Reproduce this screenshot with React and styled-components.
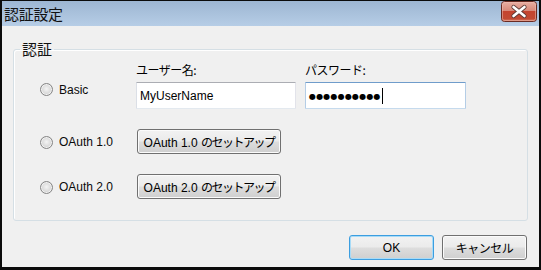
import React from 'react';
import styled, { createGlobalStyle } from 'styled-components';

const GlobalStyle = createGlobalStyle`
  html, body {
    margin: 0;
    padding: 0;
    background: #0b0b0b;
  }
  body {
    font-family: "Liberation Sans", "Noto Sans CJK JP", sans-serif;
    font-size: 12px;
    color: #000;
  }
  * {
    box-sizing: border-box;
  }
`;

const Window = styled.div`
  width: 541px;
  height: 270px;
  border-style: solid;
  border-color: #0b0b0b;
  border-width: 1px 2px 3px 2px;
  background: #f0f0f0;
  display: flex;
  flex-direction: column;
`;

const TitleBar = styled.div`
  flex: none;
  height: 25px;
  padding-left: 2px;
  display: flex;
  justify-content: space-between;
  background: linear-gradient(#9db6d2, #b6cde6);
`;

const Title = styled.span`
  font-family: "Noto Sans CJK JP", sans-serif;
  font-size: 15px;
  line-height: 25px;
  letter-spacing: -0.3px;
  color: #111;
`;

const CloseButton = styled.button`
  width: 36px;
  height: 21px;
  margin: 0 2px 0 0;
  padding: 0;
  border: none;
  background: none;
  display: block;
`;

const Content = styled.div`
  flex: 1;
  padding: 15px 11px 0 11px;
  display: flex;
  flex-direction: column;
`;

const GroupBox = styled.fieldset`
  margin: 0;
  padding: 0 0 21px 0;
  border: 1px solid #d5dfe5;
  border-radius: 3px;
  box-shadow: inset 1px 1px 0 #fff;
`;

const GroupLabel = styled.legend`
  margin-left: 6px;
  padding: 0 2px;
  font-family: "Noto Sans CJK JP", sans-serif;
  font-size: 15px;
  line-height: 16px;
  color: #111;
`;

const OptionGrid = styled.div`
  padding: 5px 0 0 26px;
  display: grid;
  grid-template-columns: 87px 160px 161px;
  column-gap: 9px;
  row-gap: 20px;
  align-items: center;
`;

const RadioOption = styled.label`
  display: flex;
  align-items: center;
  gap: 6px;
  height: 15px;
  align-self: ${(p) => (p.$raised ? 'end' : 'center')};
  margin-bottom: ${(p) => (p.$raised ? '12px' : '0')};
  margin-top: 1px;
  white-space: nowrap;
  color: #0a0a0a;
`;

const RadioDot = styled.span`
  flex: none;
  width: 13px;
  height: 13px;
  border-radius: 50%;
  border: 1px solid #858585;
  background: radial-gradient(circle at 50% 45%, #f4f4f4 0%, #dcdcdc 50%, #b9b9b9 100%);
  box-shadow: inset 0 0 0 1px #f2f2f2;
`;

const Field = styled.div`
  display: flex;
  flex-direction: column;
  gap: 4px;
`;

const FieldLabel = styled.span`
  height: 16px;
  line-height: 16px;
  font-size: 12px;
`;

const Jp = styled.span`
  font-family: "Noto Sans CJK JP", sans-serif;
  letter-spacing: ${(p) => p.$ls || '-0.5px'};
`;

const TextBox = styled.div`
  height: 27px;
  padding: 0 3px;
  display: flex;
  align-items: center;
  background: #fff;
  border: 1px solid;
  border-color: ${(p) =>
    p.$focused ? '#6f9ccb #b4cde6 #c5daed #b4cde6' : '#abadb3 #e2e3ea #e3e9ef #dbdfe6'};
  border-radius: 1px;
  font-size: 12px;
  color: #000;
`;

const Dots = styled.span`
  font-family: "DejaVu Sans", sans-serif;
  font-size: 8px;
  letter-spacing: 0.2px;
  margin-top: 1px;
`;

const Caret = styled.span`
  width: 1px;
  height: 16px;
  margin-left: 1px;
  background: #000;
`;

const PushButton = styled.button`
  height: 25px;
  width: ${(p) => p.$width || 85}px;
  margin-left: ${(p) => p.$offset || 0}px;
  padding: 0 2px;
  border: 1px solid ${(p) => (p.$default ? '#3c9ee0' : '#707070')};
  border-radius: 3px;
  background: linear-gradient(#f2f2f2 0%, #ebebeb 48%, #dddddd 52%, #cfcfcf 100%);
  box-shadow: inset 0 0 0 1px ${(p) => (p.$default ? '#a8dbf7' : '#fbfbfb')};
  font-family: "Liberation Sans", "Noto Sans CJK JP", sans-serif;
  font-size: 12px;
  color: #000;
  white-space: nowrap;
  justify-self: start;
`;

const Footer = styled.div`
  margin: 14px 1px 0 0;
  display: flex;
  justify-content: flex-end;
  gap: 8px;
`;

const CloseIcon = () => (
  <svg width="36" height="21" viewBox="0 0 36 21">
    <defs>
      <linearGradient id="closeBg" x1="0" y1="0" x2="0" y2="1">
        <stop offset="0" stopColor="#e9b0a4" />
        <stop offset="0.45" stopColor="#d88a7a" />
        <stop offset="0.5" stopColor="#c4442f" />
        <stop offset="0.85" stopColor="#c24a33" />
        <stop offset="1" stopColor="#d9806a" />
      </linearGradient>
    </defs>
    <rect x="0.5" y="0.5" width="35" height="20" rx="3" fill="url(#closeBg)" stroke="#6a2a22" />
    <rect x="1.5" y="1.5" width="33" height="18" rx="2" fill="none" stroke="#f0c2b6" strokeOpacity="0.5" />
    <path d="M12.5 6 L23.5 15 M23.5 6 L12.5 15" stroke="#5a3a36" strokeWidth="4.2" strokeLinecap="round" />
    <path d="M12.5 6 L23.5 15 M23.5 6 L12.5 15" stroke="#ffffff" strokeWidth="2.6" strokeLinecap="round" />
  </svg>
);

const App = () => (
  <>
    <GlobalStyle />
    <Window>
      <TitleBar>
        <Title>認証設定</Title>
        <CloseButton aria-label="閉じる">
          <CloseIcon />
        </CloseButton>
      </TitleBar>
      <Content>
        <GroupBox>
          <GroupLabel>認証</GroupLabel>
          <OptionGrid>
            <RadioOption $raised>
              <RadioDot />
              Basic
            </RadioOption>
            <Field>
              <FieldLabel>
                <Jp>ユーザー名:</Jp>
              </FieldLabel>
              <TextBox>MyUserName</TextBox>
            </Field>
            <Field>
              <FieldLabel>
                <Jp>パスワード:</Jp>
              </FieldLabel>
              <TextBox $focused>
                <Dots>●●●●●●●●●●</Dots>
                <Caret />
              </TextBox>
            </Field>

            <RadioOption>
              <RadioDot />
              OAuth 1.0
            </RadioOption>
            <PushButton $width={144} $offset={1}>
              OAuth 1.0 <Jp $ls="-1.5px">のセットアップ</Jp>
            </PushButton>
            <span />

            <RadioOption>
              <RadioDot />
              OAuth 2.0
            </RadioOption>
            <PushButton $width={144} $offset={1}>
              OAuth 2.0 <Jp $ls="-1.5px">のセットアップ</Jp>
            </PushButton>
            <span />
          </OptionGrid>
        </GroupBox>
        <Footer>
          <PushButton $default>OK</PushButton>
          <PushButton>
            <Jp $ls="-0.5px">キャンセル</Jp>
          </PushButton>
        </Footer>
      </Content>
    </Window>
  </>
);

export default App;
